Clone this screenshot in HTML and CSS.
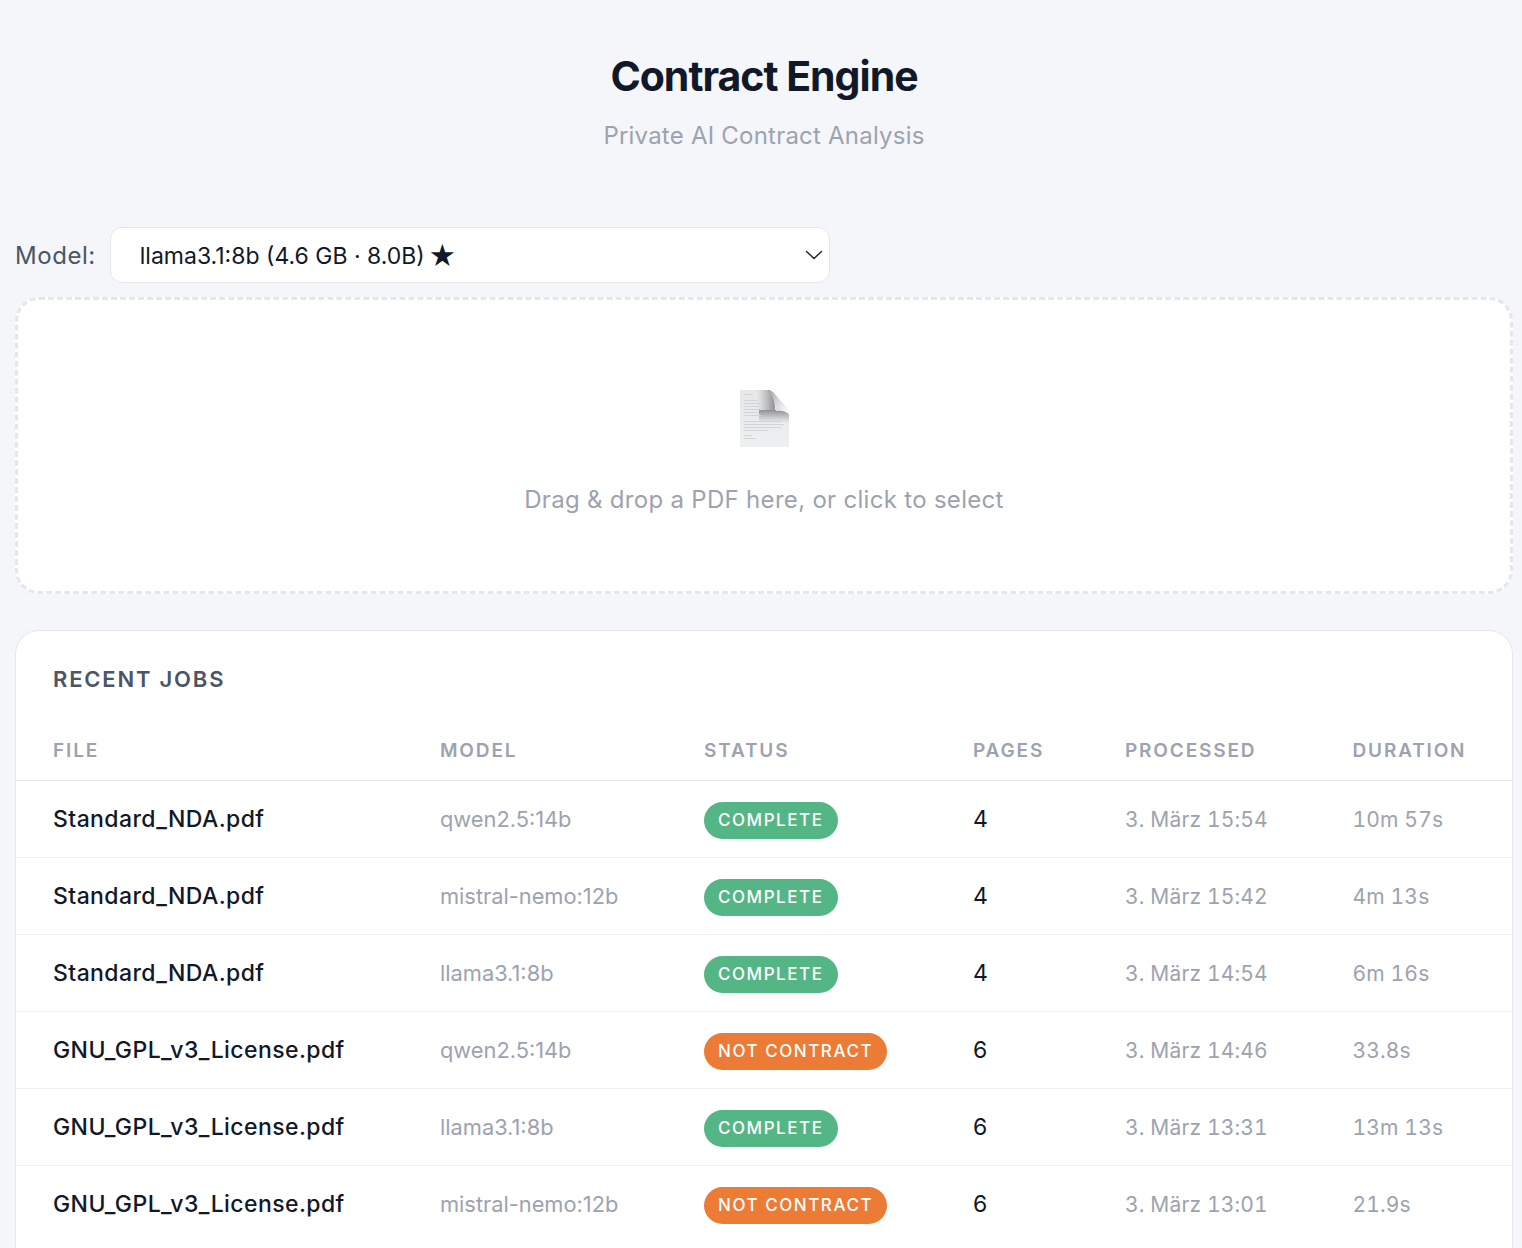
FILE: index.html
```html
<!DOCTYPE html>
<html lang="en">
<head>
<meta charset="utf-8">
<title>Contract Engine</title>
<link rel="stylesheet" href="styles.css">
</head>
<body>
<div class="page">
  <div class="header">
    <h1>Contract Engine</h1>
    <p class="subtitle">Private AI Contract Analysis</p>
  </div>

  <div class="model-row">
    <span class="model-label">Model:</span>
    <div class="model-select">
      <span class="model-value">llama3.1:8b (4.6 GB · 8.0B) <span class="star">★</span></span>
      <svg class="chevron" width="18" height="10" viewBox="0 0 18 10"><path d="M1.5 1.5 9 8.5l7.5-7" fill="none" stroke="#1f2937" stroke-width="1.5" stroke-linecap="round" stroke-linejoin="round"/></svg>
    </div>
  </div>

  <div class="dropzone">
    <svg class="doc-icon" width="50" height="58" viewBox="0 0 50 58">
      <defs>
        <linearGradient id="sheet" x1="0" y1="0" x2="0" y2="1">
          <stop offset="0" stop-color="#e6e7e9"/>
          <stop offset="1" stop-color="#eeeff0"/>
        </linearGradient>
        <linearGradient id="curl" x1="0" y1="0" x2="1" y2="0.7">
          <stop offset="0" stop-color="#9a9a9d"/>
          <stop offset="0.5" stop-color="#d4d4d6"/>
          <stop offset="1" stop-color="#f7f7f8"/>
        </linearGradient>
        <linearGradient id="shade" x1="0" y1="0" x2="1" y2="0">
          <stop offset="0" stop-color="#8b8b8e" stop-opacity="0"/>
          <stop offset="1" stop-color="#69696c"/>
        </linearGradient>
        <linearGradient id="shade-low" x1="0" y1="0" x2="0" y2="1">
          <stop offset="0" stop-color="#6d6d70"/>
          <stop offset="1" stop-color="#8b8b8e" stop-opacity="0"/>
        </linearGradient>
      </defs>
      <path d="M0 1h27c2 0 4 1 6 3l13 14c2 2 3 4 3 7v33H0z" fill="url(#sheet)"/>
      <path d="M17 1h13c3 4 5 12 5 20H17z" fill="url(#shade)" opacity="0.7"/>
      <path d="M19 21h16c5-1 10 0 14 4v9H19z" fill="url(#shade-low)" opacity="0.75"/>
      <path d="M27 1c3 0 5 1 7 3l12 14c2 2 3 4 3 7-3-3-8-4-13-3 0-8-3-16-9-21z" fill="url(#curl)"/>
      <g fill="#d3d4d7">
        <path d="M4 5h9v1H4zM4 11h14v1H4zM4 14h16v1H4zM4 17h15v1H4zM4 20h16v1H4zM4 23h15v1H4zM4 26h17v1H4z"/>
        <path d="M4 32h38v1H4zM4 35h40v1H4zM4 38h37v1H4zM4 41h24v1H4zM4 46h8v1H4zM4 49h12v1H4z"/>
      </g>
    </svg>
    <p class="dropzone-text">Drag &amp; drop a PDF here, or click to select</p>
  </div>

  <div class="jobs">
    <h2 class="jobs-title">RECENT JOBS</h2>
    <table class="jobs-table">
      <thead>
        <tr>
          <th class="col-file">FILE</th>
          <th class="col-model">MODEL</th>
          <th class="col-status">STATUS</th>
          <th class="col-pages">PAGES</th>
          <th class="col-processed">PROCESSED</th>
          <th class="col-duration">DURATION</th>
        </tr>
      </thead>
      <tbody>
        <tr>
          <td class="file">Standard_NDA.pdf</td>
          <td class="muted">qwen2.5:14b</td>
          <td><span class="badge complete">COMPLETE</span></td>
          <td class="pages">4</td>
          <td class="muted time">3. März 15:54</td>
          <td class="muted time">10m 57s</td>
        </tr>
        <tr>
          <td class="file">Standard_NDA.pdf</td>
          <td class="muted">mistral-nemo:12b</td>
          <td><span class="badge complete">COMPLETE</span></td>
          <td class="pages">4</td>
          <td class="muted time">3. März 15:42</td>
          <td class="muted time">4m 13s</td>
        </tr>
        <tr>
          <td class="file">Standard_NDA.pdf</td>
          <td class="muted">llama3.1:8b</td>
          <td><span class="badge complete">COMPLETE</span></td>
          <td class="pages">4</td>
          <td class="muted time">3. März 14:54</td>
          <td class="muted time">6m 16s</td>
        </tr>
        <tr>
          <td class="file">GNU_GPL_v3_License.pdf</td>
          <td class="muted">qwen2.5:14b</td>
          <td><span class="badge not-contract">NOT CONTRACT</span></td>
          <td class="pages">6</td>
          <td class="muted time">3. März 14:46</td>
          <td class="muted time">33.8s</td>
        </tr>
        <tr>
          <td class="file">GNU_GPL_v3_License.pdf</td>
          <td class="muted">llama3.1:8b</td>
          <td><span class="badge complete">COMPLETE</span></td>
          <td class="pages">6</td>
          <td class="muted time">3. März 13:31</td>
          <td class="muted time">13m 13s</td>
        </tr>
        <tr>
          <td class="file">GNU_GPL_v3_License.pdf</td>
          <td class="muted">mistral-nemo:12b</td>
          <td><span class="badge not-contract">NOT CONTRACT</span></td>
          <td class="pages">6</td>
          <td class="muted time">3. März 13:01</td>
          <td class="muted time">21.9s</td>
        </tr>
      </tbody>
    </table>
  </div>
</div>
</body>
</html>
```

FILE: styles.css
```css
* {box-sizing: border-box;}
html, body {height: 1248px; overflow: hidden;}
body {margin: 0; background: #f4f6fa; color: #111827; font-family: Inter, "Noto Sans", sans-serif;}
.page {padding: 0 9px 0 15px;}

.header {text-align: center; padding-top: 50px; height: 227px;}
.header h1 {margin: 0; font-size: 41px; line-height: 52px; font-weight: 700; letter-spacing: -1px; color: #111827;}
.subtitle {margin: 16px 0 0; font-size: 24px; line-height: 36px; letter-spacing: .22px; color: #9ca3af;}

.model-row {display: flex; align-items: center; gap: 14px; height: 56px;}
.model-label {font-size: 24px; letter-spacing: .55px; color: #4b5563;}
.model-select {display: flex; align-items: center; justify-content: space-between; width: 720px; height: 56px; padding: 0 6px 0 29px; background: #fff; border: 1px solid #e5e7eb; border-radius: 12px; font-size: 23px; color: #111827;}
.model-value {padding-top: 1px;}
.star {margin-left: -3px; font-size: 27px; line-height: 1; vertical-align: -2px;}

.dropzone {margin-top: 14px; height: 297px; background: #fff; border: 3px dashed #e5e7eb; border-radius: 24px; display: flex; flex-direction: column; align-items: center; padding-top: 89px;}
.doc-icon {display: block; margin-left: 1px;}
.dropzone-text {margin: 36px 0 0; font-size: 24px; line-height: 34px; letter-spacing: .3px; color: #9ca3af;}

.jobs {margin-top: 36px; height: 618px; background: #fff; border: 1px solid #e5e7eb; border-bottom: none; border-radius: 24px 24px 0 0; padding-top: 32px;}
.jobs-title {margin: 0 0 26px 37px; font-size: 22px; line-height: 32px; font-weight: 600; letter-spacing: 1.8px; color: #4b5563;}

.jobs-table {width: 100%; border-collapse: collapse; table-layout: fixed;}
.jobs-table th {height: 59px; padding: 0; text-align: left; font-size: 19px; font-weight: 600; letter-spacing: 1.85px; color: #9ca3af; border-bottom: 1px solid #e5e7eb;}
.jobs-table td {height: 77px; padding: 0; font-size: 21.8px; border-bottom: 1px solid #f0f1f3;}
.jobs-table tbody tr:last-child td {border-bottom: none;}
.jobs-table th.col-file {width: 424px; padding-left: 37px;}
.col-model {width: 264px;}
.col-status {width: 269px;}
.col-pages {width: 152px;}
.col-processed {width: 227.5px;}
.jobs-table td.file {padding-left: 37px; font-size: 23px; font-weight: 500; letter-spacing: .42px; color: #111827;}
.jobs-table td.muted {color: #9ca3af;}
.jobs-table td.time {padding-top: 2px; font-size: 21px; font-variant-numeric: tabular-nums; letter-spacing: .15px;}
.jobs-table td.pages {font-size: 23px; color: #111827;}

.badge {display: inline-block; height: 37px; margin-top: 4px; line-height: 37px; padding: 0 14px; border-radius: 19px; color: #fff; font-size: 17px; font-weight: 500; letter-spacing: 1.55px; vertical-align: middle;}
.complete {background: #55b685;}
.not-contract {background: #ec7b36;}
```
